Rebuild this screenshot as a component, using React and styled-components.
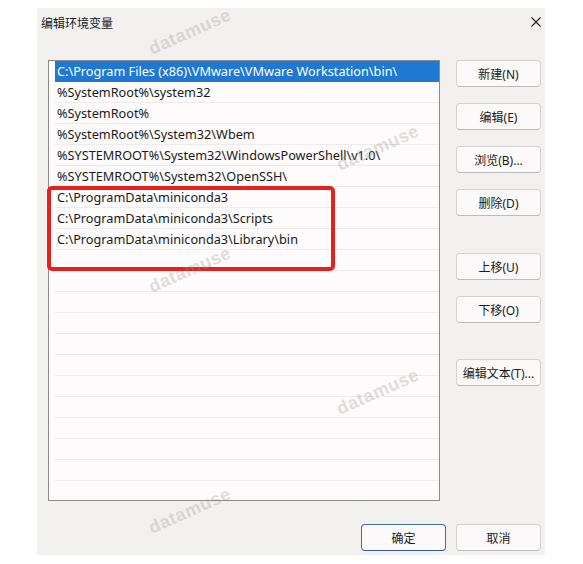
import styled, { createGlobalStyle } from "styled-components";

const GlobalStyle = createGlobalStyle`
    html, body {
        margin: 0;
        padding: 0;
        background: #ffffff;
    }

    body {
        font-family: "Noto Sans", "Noto Sans CJK SC", sans-serif;
        color: #1a1a1a;
    }
`

const Page = styled.div`
    position: relative;
    width: 583px;
    height: 564px;
    overflow: hidden;
    padding-top: 8px;
    box-sizing: border-box;
`

const Dialog = styled.div`
    display: flex;
    flex-direction: column;
    width: 508px;
    height: 547px;
    margin-left: 37px;
    padding: 0 4px 4px 0;
    box-sizing: border-box;
    background: #f3f0f0;
`

const TitleBar = styled.div`
    display: flex;
    align-items: center;
    justify-content: space-between;
    height: 28px;
    padding-left: 4px;
`

const Title = styled.h1`
    margin: 0;
    font-family: "Noto Sans CJK SC", sans-serif;
    font-size: 12px;
    font-weight: 400;
    color: #1a1a1a;
`

const CloseButton = styled.button`
    display: flex;
    align-items: center;
    justify-content: center;
    width: 10px;
    height: 10px;
    padding: 0;
    border: none;
    background: none;
    color: #222;
`

const Content = styled.div`
    display: flex;
    gap: 16px;
    margin-top: 24px;
    padding-left: 11px;
`

const ListWrap = styled.div`
    position: relative;
`

const ListBox = styled.div`
    width: 392px;
    height: 441px;
    box-sizing: border-box;
    border: 1px solid #8e8a8a;
    padding-left: 6px;
    background: #fdfbfb;
    overflow: hidden;
`

const Row = styled.div`
    height: 21px;
    line-height: 20px;
    box-sizing: border-box;
    padding-left: 2px;
    border-bottom: 1px solid ${({ $selected }) => ($selected ? "#1f78d1" : "#f0eaea")};
    background: ${({ $selected }) => ($selected ? "#1f78d1" : "transparent")};
    color: ${({ $selected }) => ($selected ? "#ffffff" : "#1a1a1a")};
    font-size: 12.7px;
    white-space: nowrap;
`

const Marker = styled.div`
    position: absolute;
    left: -1px;
    top: 126px;
    width: 288px;
    height: 85px;
    box-sizing: border-box;
    border: 4px solid #e8201c;
    border-radius: 5px;
    pointer-events: none;
`

const ButtonColumn = styled.div`
    display: flex;
    flex-direction: column;
    gap: 16px;
    width: 85px;
`

const Botao = styled.button`
    width: 85px;
    height: 27px;
    margin-top: ${({ $espaco }) => $espaco || 0}px;
    padding: 0;
    box-sizing: border-box;
    border: 1px solid ${({ $padrao }) => ($padrao ? "#3f6ea6" : "#d6d2d2")};
    border-bottom-color: ${({ $padrao }) => ($padrao ? "#2f5c94" : "#bfbbbb")};
    border-radius: 4px;
    background: #fbf9f9;
    font-family: "Noto Sans", "Noto Sans CJK SC", sans-serif;
    font-size: 12px;
    color: #1a1a1a;
`

const Footer = styled.div`
    display: flex;
    justify-content: flex-end;
    gap: 10px;
    margin-top: 23px;
`

const Watermark = styled.span`
    position: absolute;
    left: ${({ $x }) => $x}px;
    top: ${({ $y }) => $y}px;
    transform: translate(-50%, -50%) rotate(-24deg);
    font-family: "Liberation Sans", sans-serif;
    font-size: 18px;
    font-weight: 700;
    letter-spacing: 0.5px;
    color: rgba(150, 144, 144, 0.3);
    pointer-events: none;
`

const caminhos = [
    "C:\\Program Files (x86)\\VMware\\VMware Workstation\\bin\\",
    "%SystemRoot%\\system32",
    "%SystemRoot%",
    "%SystemRoot%\\System32\\Wbem",
    "%SYSTEMROOT%\\System32\\WindowsPowerShell\\v1.0\\",
    "%SYSTEMROOT%\\System32\\OpenSSH\\",
    "C:\\ProgramData\\miniconda3",
    "C:\\ProgramData\\miniconda3\\Scripts",
    "C:\\ProgramData\\miniconda3\\Library\\bin",
]

const linhas = [...caminhos, ...Array(12).fill("")]

const marcas = [
    [190, 32],
    [378, 148],
    [190, 270],
    [378, 392],
    [190, 511],
]

export default function App() {
    return (
        <>
            <GlobalStyle />
            <Page>
                <Dialog>
                    <TitleBar>
                        <Title>编辑环境变量</Title>
                        <CloseButton aria-label="关闭">
                            <svg width="10" height="10" viewBox="0 0 10 10">
                                <path d="M0.5 0.5 L9.5 9.5 M9.5 0.5 L0.5 9.5" stroke="currentColor" strokeWidth="1.1" />
                            </svg>
                        </CloseButton>
                    </TitleBar>

                    <Content>
                        <ListWrap>
                            <ListBox>
                                {linhas.map((texto, i) => (
                                    <Row key={i} $selected={i === 0}>{texto}</Row>
                                ))}
                            </ListBox>
                            <Marker />
                        </ListWrap>

                        <ButtonColumn>
                            <Botao>新建(N)</Botao>
                            <Botao>编辑(E)</Botao>
                            <Botao>浏览(B)...</Botao>
                            <Botao>删除(D)</Botao>
                            <Botao $espaco={21}>上移(U)</Botao>
                            <Botao>下移(O)</Botao>
                            <Botao $espaco={20}>编辑文本(T)...</Botao>
                        </ButtonColumn>
                    </Content>

                    <Footer>
                        <Botao $padrao>确定</Botao>
                        <Botao>取消</Botao>
                    </Footer>
                </Dialog>

                {marcas.map(([x, y], i) => (
                    <Watermark key={i} $x={x} $y={y}>datamuse</Watermark>
                ))}
            </Page>
        </>
    )
}
